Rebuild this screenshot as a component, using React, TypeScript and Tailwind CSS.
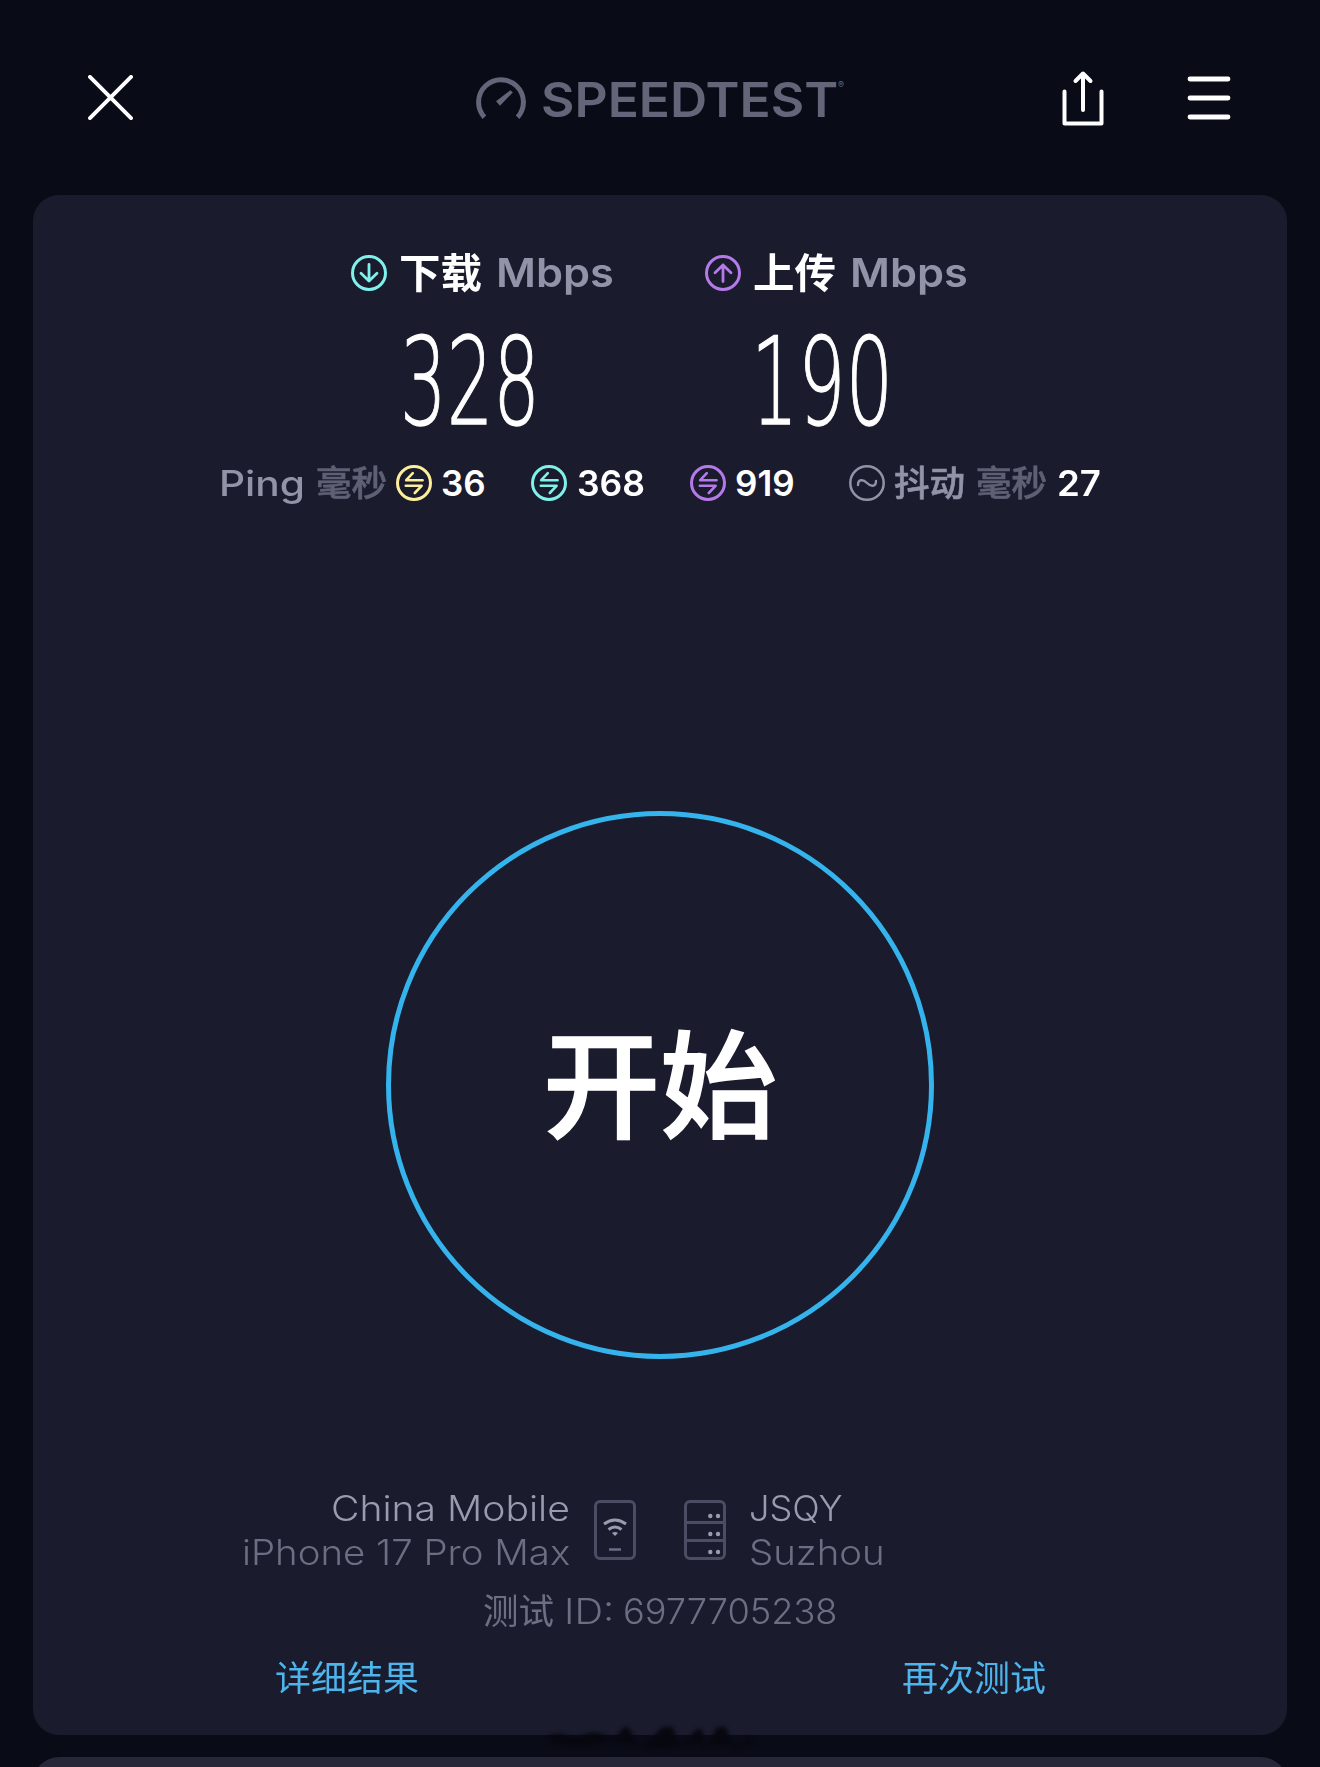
import React, { useLayoutEffect, useRef, useState } from "react";
import clsx from "clsx";

interface FitTextProps {
  className?: string;
  children: React.ReactNode;
}

// Stretches a single line of text to the width of its box
const FitText: React.FC<FitTextProps> = ({ className, children }) => {
  const boxRef = useRef<HTMLDivElement>(null);
  const textRef = useRef<HTMLSpanElement>(null);
  const [scale, setScale] = useState(1);

  useLayoutEffect(() => {
    if (boxRef.current && textRef.current) {
      setScale(boxRef.current.clientWidth / textRef.current.offsetWidth);
    }
  }, [children]);

  return (
    <div ref={boxRef} className={clsx("shrink-0 whitespace-nowrap", className)}>
      <span
        ref={textRef}
        className="inline-block origin-left"
        style={{ transform: `scaleX(${scale})` }}
      >
        {children}
      </span>
    </div>
  );
};

const ArrowIcon = ({ up, className }: { up?: boolean; className: string }) => (
  <svg viewBox="0 0 36 36" fill="none" stroke="currentColor" strokeWidth="3" className={clsx("size-9 shrink-0", className)}>
    <circle cx="18" cy="18" r="16.5" />
    <path
      d={up ? "M18 26.5V10M10 17.8L18 10l8 7.8" : "M18 9.5V26M10 18.2L18 26l8-7.8"}
      strokeWidth="2.8"
      strokeLinejoin="round"
      strokeLinecap="round"
    />
  </svg>
);

const PingIcon = ({ className }: { className: string }) => (
  <svg viewBox="0 0 36 36" fill="none" stroke="currentColor" strokeWidth="3" className={clsx("size-9 shrink-0", className)}>
    <circle cx="18" cy="18" r="16.5" />
    <path d="M16.8 8.2l-6.6 7h16.4M9.8 20.8h15.8l-6.8 7.2" strokeWidth="2.6" strokeLinejoin="round" strokeLinecap="round" />
  </svg>
);

const JitterIcon = () => (
  <svg viewBox="0 0 36 36" fill="none" stroke="currentColor" className="size-9 shrink-0 text-[#9193a8]">
    <circle cx="18" cy="18" r="16.7" strokeWidth="2.5" />
    <path d="M9 20c0-6 5-6 9-2s9 4 9-2" strokeWidth="2.4" strokeLinecap="round" />
  </svg>
);

const Header = () => (
  <header className="flex h-[195px] shrink-0 items-start">
    <svg viewBox="0 0 46 46" className="mt-[75px] ml-[88px] size-[45px] stroke-white" strokeWidth="4" strokeLinecap="round">
      <path d="M2 2l42 42M44 2L2 44" />
    </svg>
    <svg viewBox="0 0 50 43" className="mt-[77px] ml-[343px] h-[43px] w-[50px]" fill="none">
      <path d="M8.4 40.2A22.4 22.4 0 1 1 41.6 40.2" stroke="#65657a" strokeWidth="5" />
      <path d="M34.5 13.2l2.3 2.2L24 28.7l-4-4.4z" fill="#65657a" />
    </svg>
    <FitText className="mt-[70px] ml-[15px] w-[297px] text-[48px] leading-[60px] font-semibold text-[#65657a]">
      SPEEDTEST
    </FitText>
    <span className="mt-[80px] w-[7px] text-[9px] leading-[10px] text-[#65657a]">®</span>
    <svg viewBox="0 0 42 56" className="mt-[70px] ml-[217px] h-[56px] w-[42px]" fill="none" stroke="#fff" strokeWidth="4" strokeLinecap="round" strokeLinejoin="round">
      <path d="M2.5 21.5v32h37v-32M21 40V3.5M13.5 11L21 3.5l7.5 7.5" />
    </svg>
    <svg viewBox="0 0 44 44" className="mt-[76px] ml-[83px] h-[44px] w-[44px]" stroke="#fff" strokeWidth="4.8" strokeLinecap="round">
      <path d="M3 3h38M3 22h38M3 41h38" />
    </svg>
  </header>
);

interface SpeedProps {
  label: string;
  value: string;
  up?: boolean;
}

const Speed: React.FC<SpeedProps> = ({ label, value, up }) => (
  <div className="w-[264px]">
    <div className="flex items-center">
      <ArrowIcon up={up} className={up ? "text-[#b57aea]" : "text-[#80f1ea]"} />
      <FitText className="ml-[12px] w-[83px] text-[41px] leading-[60px] font-bold text-white">{label}</FitText>
      <FitText className="ml-[14px] w-[118px] text-[40px] leading-[60px] font-semibold text-[#9193a8]">Mbps</FitText>
    </div>
    <FitText
      className={clsx(
        "mt-[25px] h-[108px] font-['DejaVu_Sans'] text-[120.5px] leading-[108px] font-extralight text-white [-webkit-text-stroke:1.3px_#fff]",
        up ? "ml-[46px] w-[142px]" : "ml-[49px] w-[140px]"
      )}
    >
      {value}
    </FitText>
  </div>
);

const StartButton = () => (
  <button className="mx-auto mt-[303px] flex size-[548px] shrink-0 items-center justify-center rounded-full border-[5px] border-[#35b3ed]">
    <span className="pt-[3px] text-[117px] leading-[150px] font-medium text-white [-webkit-text-stroke:1.5px_#fff]">开始</span>
  </button>
);

export default function App() {
  return (
    <div className="relative flex h-[1767px] w-[1320px] flex-col overflow-hidden bg-[#090b17] font-[Inter,'Noto_Sans_CJK_SC',sans-serif]">
      <Header />
      <main className="mx-[33px] flex h-[1540px] shrink-0 flex-col rounded-[26px] bg-[#1a1b2d]">
        <div className="mt-[48px] ml-[318px] flex gap-[90px]">
          <Speed label="下载" value="328" />
          <Speed label="上传" value="190" up />
        </div>

        <div className="mt-[22px] flex h-[50px] items-center text-[35px] leading-[50px] font-semibold text-white">
          <FitText className="ml-[186px] w-[86px] font-medium text-[#9193a8]">Ping</FitText>
          <FitText className="ml-[11px] w-[71px] font-medium text-[#5f6074] [-webkit-text-stroke:0.6px_#5f6074]">毫秒</FitText>
          <PingIcon className="ml-[9px] text-[#fdee9c]" />
          <FitText className="ml-[9px] w-[45px]">36</FitText>
          <PingIcon className="ml-[45px] text-[#80f1ea]" />
          <FitText className="ml-[10px] w-[68px]">368</FitText>
          <PingIcon className="ml-[45px] text-[#b57aea]" />
          <FitText className="ml-[9px] w-[60px]">919</FitText>
          <div className="ml-[54px] flex">
            <JitterIcon />
          </div>
          <FitText className="ml-[9px] w-[71px] font-medium text-[#9193a8] [-webkit-text-stroke:0.6px_#9193a8]">抖动</FitText>
          <FitText className="ml-[11px] w-[71px] font-medium text-[#5f6074] [-webkit-text-stroke:0.6px_#5f6074]">毫秒</FitText>
          <FitText className="ml-[10px] w-[44px]">27</FitText>
        </div>

        <StartButton />

        <div className="mt-[127px] flex text-[35px] leading-[44px] font-light">
          <div className="flex w-[537px] flex-col items-end">
            <FitText className="w-[239px] text-[#9a9bb0]">China Mobile</FitText>
            <FitText className="w-[328px] text-[#6d6e83]">iPhone 17 Pro Max</FitText>
          </div>
          <svg viewBox="0 0 42 60" className="mt-[14px] ml-[24px] h-[60px] w-[42px]" fill="none">
            <rect x="1.5" y="1.5" width="39" height="57" rx="4.5" stroke="#4c4d64" strokeWidth="3" />
            <path d="M10 24Q21 16 32 24M14.5 29.5Q21 24.5 27.5 29.5" stroke="#9a9bb0" strokeWidth="3" />
            <path d="M18 33q3-2 6 0l-3 3z" fill="#9a9bb0" />
            <path d="M15 49.5h12" stroke="#6d6e83" strokeWidth="2.5" />
          </svg>
          <svg viewBox="0 0 42 60" className="mt-[14px] ml-[48px] h-[60px] w-[42px]" fill="none">
            <rect x="1.5" y="1.5" width="39" height="57" rx="4.5" stroke="#4c4d64" strokeWidth="3" />
            <path d="M2 22.5h38M2 40.5h38" stroke="#4c4d64" strokeWidth="2.8" />
            {[16, 34, 52].map((y) => (
              <g key={y} fill="#9a9bb0">
                <circle cx="26.3" cy={y} r="2.2" />
                <circle cx="34" cy={y} r="2.2" />
              </g>
            ))}
          </svg>
          <div className="ml-[23px]">
            <FitText className="w-[94px] text-[#9a9bb0]">JSQY</FitText>
            <FitText className="w-[136px] text-[#6d6e83]">Suzhou</FitText>
          </div>
        </div>

        <div className="mt-[13px] ml-[450px] flex text-[35px] leading-[48px] font-light text-[#6d6e83]">
          <FitText className="w-[71px] font-normal">测试</FitText>
          <FitText className="ml-[10px] w-[50px]">ID:</FitText>
          <FitText className="ml-[9px] w-[214px]">6977705238</FitText>
        </div>

        <div className="mt-[18px] flex text-[35px] leading-[50px] font-normal text-[#4db4ec]">
          <FitText className="ml-[242px] w-[144px]">详细结果</FitText>
          <FitText className="ml-[483px] w-[144px]">再次测试</FitText>
        </div>
      </main>

      <div className="mx-[33px] mt-[22px] h-[60px] shrink-0 rounded-[26px] bg-[#272739]" />

      {/* faint smudge over the gap between the cards */}
      <svg viewBox="0 0 220 24" className="absolute top-[1727px] left-[545px] h-[24px] w-[220px] blur-[2px]">
        <path
          d="M4 9Q14 5 22 9T40 8T60 9T76 4T88 10T110 8T130 7T146 9T158 12T168 8T184 10T204 9L208 16Q190 20 170 17T130 19T90 18T50 17T6 15Z"
          fill="#07070f"
        />
      </svg>
    </div>
  );
}
